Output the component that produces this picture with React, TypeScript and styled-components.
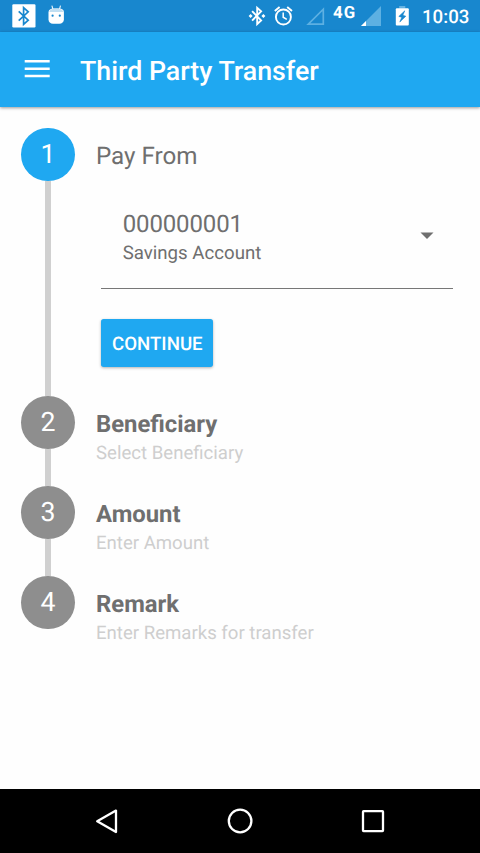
import React from "react";
import styled, { createGlobalStyle } from "styled-components";

const BLUE = "#1fa8f1";

const GlobalStyle = createGlobalStyle`
  *, *::before, *::after { box-sizing: border-box; }
  html, body { margin: 0; padding: 0; background: #fff; }
  body {
    font-family: Roboto, "Noto Sans", sans-serif;
    text-rendering: geometricPrecision;
    overflow: hidden;
  }
  svg { display: block; flex: none; }
`;

const Screen = styled.div`
  display: flex;
  flex-direction: column;
  width: 480px;
  height: 853px;
  background: #fefefe;
`;

const StatusBar = styled.header`
  display: flex;
  justify-content: space-between;
  height: 32px;
  flex: none;
  background: #1887ce;
  color: #fff;
`;

const StatusGroup = styled.div`
  display: flex;
  align-items: flex-start;
`;

const NetworkType = styled.span`
  width: 27px;
  margin: 4px 0 0 8px;
  font-size: 16.8px;
  font-weight: 700;
  line-height: 18px;
  letter-spacing: 1px;
`;

const Clock = styled.time`
  width: 58px;
  margin: 5px 0 0 12px;
  font-size: 18.67px;
  font-weight: 500;
  line-height: 24px;
  white-space: nowrap;
`;

const AppBar = styled.div`
  display: flex;
  align-items: center;
  height: 74.67px;
  flex: none;
  padding-left: 24px;
  background: ${BLUE};
  box-shadow: 0 1px 3px rgba(0, 0, 0, 0.4);
`;

const IconButton = styled.button`
  display: block;
  border: 0;
  padding: 0;
  background: transparent;
  color: inherit;
`;

const Title = styled.h1`
  margin: 3px 0 0 30px;
  color: #fff;
  font-size: 26.75px;
  font-weight: 500;
  line-height: 32px;
`;

const Stepper = styled.main`
  flex: 1;
  padding: 21.33px 26.67px 0 21.33px;
`;

const StepRow = styled.section<{ $height: number }>`
  display: flex;
  height: ${(p) => p.$height}px;
`;

const Rail = styled.div`
  display: flex;
  flex-direction: column;
  align-items: center;
  width: 53.33px;
  flex: none;
  margin-right: 21.33px;
`;

const Bullet = styled.div<{ $active?: boolean }>`
  width: 53.33px;
  height: 53.33px;
  flex: none;
  border-radius: 50%;
  background: ${(p) => (p.$active ? BLUE : "#8e8e8e")};
  color: #fff;
  font-size: 26.67px;
  line-height: 53.33px;
  text-align: center;
`;

const Connector = styled.div`
  width: 5.33px;
  flex: 1;
  background: #d0d0d0;
`;

const StepBody = styled.div`
  flex: 1;
  min-width: 0;
  padding-top: 14px;
`;

const StepTitle = styled.h2<{ $active?: boolean }>`
  margin: 0;
  color: #6f6f6f;
  font-size: ${(p) => (p.$active ? 24.2 : 23.85)}px;
  font-weight: ${(p) => (p.$active ? 400 : 700)};
  line-height: 28px;
`;

const StepHint = styled.p`
  margin: 3px 0 0;
  color: #cecece;
  font-size: 18.6px;
  line-height: 24px;
`;

const AccountSelect = styled.div`
  display: flex;
  justify-content: space-between;
  height: 79px;
  margin: 40px 0 0 5.33px;
  padding: 0 19.3px 0 21.33px;
  border-bottom: 1.4px solid #777;
`;

const AccountNumber = styled.div`
  color: #6f6f6f;
  font-size: 24px;
  line-height: 28px;
  letter-spacing: -0.12px;
`;

const AccountType = styled.div`
  color: #6f6f6f;
  font-size: 18.67px;
  line-height: 24px;
  padding-top: 3px;
`;

const Caret = styled.svg`
  margin-top: 22px;
`;

const ContinueButton = styled.button`
  display: block;
  width: 112px;
  height: 48px;
  margin: 30px 0 0 5.33px;
  border: 0;
  border-radius: 2.67px;
  padding: 2px 0 0;
  background: ${BLUE};
  color: #fff;
  font-family: inherit;
  font-size: 18.67px;
  font-weight: 500;
  text-rendering: inherit;
  box-shadow: 0 1px 3px rgba(0, 0, 0, 0.3);
`;

const NavBar = styled.nav`
  display: flex;
  justify-content: center;
  align-items: center;
  gap: 105.33px;
  height: 64px;
  flex: none;
  background: #000;
`;

function BluetoothBadge() {
  return (
    <svg width="48" height="32" viewBox="0 0 48 32">
      <rect x="12.3" y="4.3" width="23.2" height="23.2" rx="1.2" fill="#fff" />
      <path d="M18.7 11.4L28.2 20.2L23.6 24.4V7.6L28.2 11.8L18.7 20.6" fill="none" stroke="#1887ce" strokeWidth="1.7" />
    </svg>
  );
}

function RobotIcon() {
  return (
    <svg width="24" height="32" viewBox="0 0 24 32">
      <path d="M4 6L5 9.5M12.4 6L11.4 9.5" stroke="#e8f4fb" strokeWidth="1.1" strokeLinecap="round" />
      <path d="M.5 12C.5 9.8 3 8.6 5 8.6H11.4C13.8 8.6 15.9 9.8 15.9 12V19.5C15.9 22.2 13.8 23.7 11.4 23.7H5C2.4 23.7 .5 22.2 .5 19.5Z" fill="#fff" />
      <path d="M1.2 11.9C2 9.5 4 8.6 8.2 8.6S14.4 9.5 15.2 11.9Z" fill="#c1dff2" />
      <circle cx="4.6" cy="15.7" r="1.1" fill="#1887ce" />
      <circle cx="11.8" cy="15.7" r="1.1" fill="#1887ce" />
    </svg>
  );
}

function BluetoothConnected() {
  return (
    <svg width="26" height="32" viewBox="0 0 26 32">
      <path d="M4.1 11.2L13.1 20.4L9.2 24V7.8L13.1 11.4L4.1 20.6" fill="none" stroke="#fff" strokeWidth="1.9" />
      <path d="M2.6 13.9L4.6 15.9L2.6 17.9L.6 15.9ZM15.4 13.9L17.4 15.9L15.4 17.9L13.4 15.9Z" fill="#fff" />
    </svg>
  );
}

function AlarmIcon() {
  return (
    <svg width="32" height="32" viewBox="0 0 32 32">
      <g fill="none" stroke="#fff" strokeWidth="1.9">
        <circle cx="9.4" cy="17" r="7.5" />
        <path d="M.8 11.1L5.6 7.1M18 11.1L13.2 7.1" />
        <path d="M9.2 12.5V17.2L12.8 19.3" strokeWidth="1.5" />
      </g>
    </svg>
  );
}

function EmptySignal() {
  return (
    <svg width="19" height="32" viewBox="0 0 19 32">
      <path d="M2.3 24.2H17.3V9.2Z" fill="none" stroke="#5db0e2" strokeWidth="1.7" />
    </svg>
  );
}

function WeakSignal() {
  return (
    <svg width="35" height="32" viewBox="0 0 35 32">
      <path d="M1 26H21V6Z" fill="#5db0e2" />
      <path d="M1 26H6V21Z" fill="#fff" />
    </svg>
  );
}

function ChargingBattery() {
  return (
    <svg width="15" height="32" viewBox="0 0 15 32">
      <path d="M4.2 6H10.3V8.5H4.2Z" fill="#67b3e2" />
      <path d="M1.8 8.2H12.8Q13.8 8.2 13.8 9.2V24.4Q13.8 25.4 12.8 25.4H1.8Q.8 25.4 .8 24.4V9.2Q.8 8.2 1.8 8.2Z" fill="#fff" />
      <path d="M9.8 10.8L3.8 16.4L6.8 17.3L4.8 22L10.8 16.2L7.8 15.3Z" fill="#1887ce" stroke="#1887ce" strokeWidth=".6" />
    </svg>
  );
}

interface StepProps {
  number: number;
  title: string;
  height: number;
  hint?: string;
  active?: boolean;
  last?: boolean;
  children?: React.ReactNode;
}

function Step({ number, title, height, hint, active, last, children }: StepProps) {
  return (
    <StepRow $height={height}>
      <Rail>
        <Bullet $active={active}>{number}</Bullet>
        {!last && <Connector />}
      </Rail>
      <StepBody>
        <StepTitle $active={active}>{title}</StepTitle>
        {hint && <StepHint>{hint}</StepHint>}
        {children}
      </StepBody>
    </StepRow>
  );
}

export default function App() {
  return (
    <>
      <GlobalStyle />
      <Screen>
        <StatusBar>
          <StatusGroup>
            <BluetoothBadge />
            <RobotIcon />
          </StatusGroup>
          <StatusGroup>
            <BluetoothConnected />
            <AlarmIcon />
            <EmptySignal />
            <NetworkType>4G</NetworkType>
            <WeakSignal />
            <ChargingBattery />
            <Clock>10:03</Clock>
          </StatusGroup>
        </StatusBar>
        <AppBar>
          <IconButton aria-label="Menu">
            <svg width="26" height="20" viewBox="0 0 26 20">
              <path d="M.7 2.3H25.7M.7 9.7H25.7M.7 17H25.7" stroke="#fff" strokeWidth="2.6" />
            </svg>
          </IconButton>
          <Title>Third Party Transfer</Title>
        </AppBar>
        <Stepper>
          <Step number={1} title="Pay From" height={268} active>
            <AccountSelect>
              <div>
                <AccountNumber>000000001</AccountNumber>
                <AccountType>Savings Account</AccountType>
              </div>
              <Caret width="14" height="8" viewBox="0 0 14 8">
                <path d="M.5 .5H13.5L7 7Z" fill="#6f6f6f" />
              </Caret>
            </AccountSelect>
            <ContinueButton>CONTINUE</ContinueButton>
          </Step>
          <Step number={2} title="Beneficiary" hint="Select Beneficiary" height={90} />
          <Step number={3} title="Amount" hint="Enter Amount" height={90} />
          <Step number={4} title="Remark" hint="Enter Remarks for transfer" height={90} last />
        </Stepper>
        <NavBar>
          <IconButton aria-label="Back">
            <svg width="28" height="28" viewBox="0 0 28 28">
              <path d="M4.2 14.3L23 3.6V25Z" fill="none" stroke="#fff" strokeWidth="2.3" strokeLinejoin="round" />
            </svg>
          </IconButton>
          <IconButton aria-label="Home">
            <svg width="28" height="28" viewBox="0 0 28 28">
              <circle cx="14.1" cy="14" r="11.3" fill="none" stroke="#fff" strokeWidth="2.3" />
            </svg>
          </IconButton>
          <IconButton aria-label="Recent apps">
            <svg width="28" height="28" viewBox="0 0 28 28">
              <rect x="4" y="4.1" width="20" height="20" rx=".6" fill="none" stroke="#fff" strokeWidth="2.3" />
            </svg>
          </IconButton>
        </NavBar>
      </Screen>
    </>
  );
}
